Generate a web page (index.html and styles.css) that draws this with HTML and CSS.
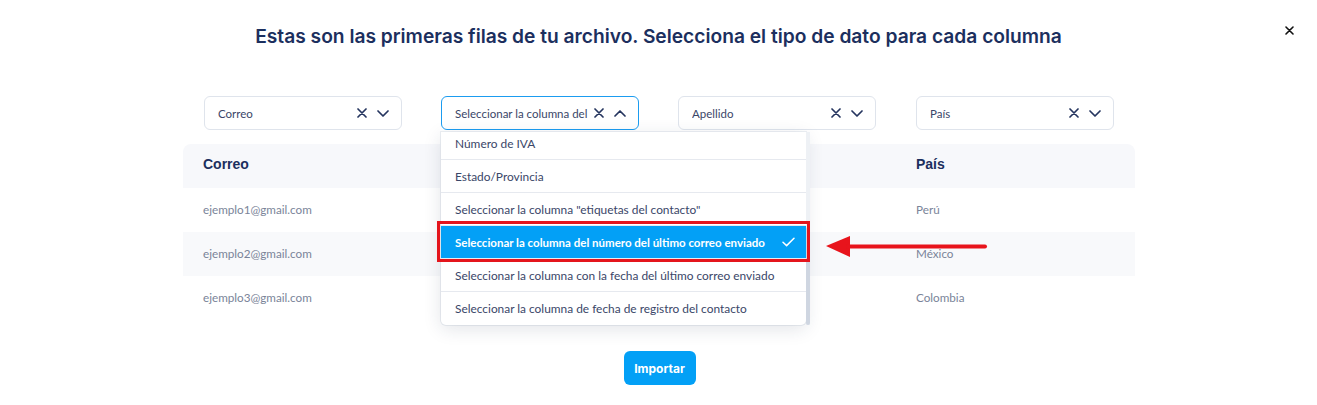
FILE: index.html
```html
<!DOCTYPE html>
<html lang="es">
<head>
<meta charset="utf-8">
<title>Importar</title>
<link rel="stylesheet" href="styles.css">
</head>
<body>
<div class="modal">
  <button class="close" aria-label="Cerrar">
    <svg width="9" height="9" viewBox="0 0 9 9"><path d="M1 1L8 8M8 1L1 8" stroke="#111" stroke-width="1.6" stroke-linecap="round"/></svg>
  </button>
  <h1 class="title">Estas son las primeras filas de tu archivo. Selecciona el tipo de dato para cada columna</h1>

  <div class="sheet">
    <div class="selects">
      <div class="cell-select">
        <div class="select">
          <span class="select-text">Correo</span>
          <svg class="ico-x" width="10" height="10" viewBox="0 0 10 10"><path d="M1 1L9 9M9 1L1 9" stroke="#25355f" stroke-width="1.7" stroke-linecap="round"/></svg>
          <svg class="ico-chev" width="12" height="7" viewBox="0 0 12 7"><path d="M1 1L6 6L11 1" fill="none" stroke="#25355f" stroke-width="1.7" stroke-linecap="round" stroke-linejoin="round"/></svg>
        </div>
      </div>
      <div class="cell-select">
        <div class="select focused">
          <span class="select-text">Seleccionar la columna del</span>
          <svg class="ico-x" width="10" height="10" viewBox="0 0 10 10"><path d="M1 1L9 9M9 1L1 9" stroke="#25355f" stroke-width="1.7" stroke-linecap="round"/></svg>
          <svg class="ico-chev" width="12" height="7" viewBox="0 0 12 7"><path d="M1 6L6 1L11 6" fill="none" stroke="#25355f" stroke-width="1.7" stroke-linecap="round" stroke-linejoin="round"/></svg>
        </div>
        <div class="dropdown">
          <ul class="options">
            <li class="option first">Número de IVA</li>
            <li class="option">Estado/Provincia</li>
            <li class="option">Seleccionar la columna "etiquetas del contacto"</li>
            <li class="option selected"><span class="opt-label">Seleccionar la columna del número del último correo enviado</span>
              <svg class="check" width="13" height="10" viewBox="0 0 13 10"><path d="M1 5.2L4.6 8.6L12 1.2" fill="none" stroke="#fff" stroke-width="1.5" stroke-linecap="round" stroke-linejoin="round"/></svg>
            </li>
            <li class="option">Seleccionar la columna con la fecha del último correo enviado</li>
            <li class="option">Seleccionar la columna de fecha de registro del contacto</li>
          </ul>
          <div class="scrollbar"><div class="thumb"></div></div>
        </div>
      </div>
      <div class="cell-select">
        <div class="select">
          <span class="select-text">Apellido</span>
          <svg class="ico-x" width="10" height="10" viewBox="0 0 10 10"><path d="M1 1L9 9M9 1L1 9" stroke="#25355f" stroke-width="1.7" stroke-linecap="round"/></svg>
          <svg class="ico-chev" width="12" height="7" viewBox="0 0 12 7"><path d="M1 1L6 6L11 1" fill="none" stroke="#25355f" stroke-width="1.7" stroke-linecap="round" stroke-linejoin="round"/></svg>
        </div>
      </div>
      <div class="cell-select">
        <div class="select">
          <span class="select-text">País</span>
          <svg class="ico-x" width="10" height="10" viewBox="0 0 10 10"><path d="M1 1L9 9M9 1L1 9" stroke="#25355f" stroke-width="1.7" stroke-linecap="round"/></svg>
          <svg class="ico-chev" width="12" height="7" viewBox="0 0 12 7"><path d="M1 1L6 6L11 1" fill="none" stroke="#25355f" stroke-width="1.7" stroke-linecap="round" stroke-linejoin="round"/></svg>
        </div>
      </div>
    </div>

    <div class="table">
      <div class="row head">
        <div class="td">Correo</div><div class="td"></div><div class="td"></div><div class="td">País</div>
      </div>
      <div class="row">
        <div class="td">ejemplo1@gmail.com</div><div class="td"></div><div class="td"></div><div class="td">Perú</div>
      </div>
      <div class="row alt">
        <div class="td">ejemplo2@gmail.com</div><div class="td"></div><div class="td"></div><div class="td">México</div>
      </div>
      <div class="row">
        <div class="td">ejemplo3@gmail.com</div><div class="td"></div><div class="td"></div><div class="td">Colombia</div>
      </div>
    </div>

    <svg class="arrow" width="164" height="24" viewBox="0 0 164 24">
      <polygon points="1,11 25,1 25,22" fill="#e8141c"/>
      <path d="M23 11.5H160" stroke="#e8141c" stroke-width="4" stroke-linecap="round"/>
    </svg>
  </div>

  <div class="actions">
    <button class="btn-primary">Importar</button>
  </div>
</div>
</body>
</html>
```

FILE: styles.css
```css
* { box-sizing: border-box; }
html, body { margin: 0; padding: 0; background: #fff; }
body { font-family: "Lato", "Open Sans", sans-serif; color: #3a4668; }

.modal { position: relative; width: 1317px; height: 405px; padding-top: 24px; }

.close {
  position: absolute; top: 21px; right: 19px;
  width: 18px; height: 18px; padding: 0; border: 0; background: none;
  display: flex; align-items: center; justify-content: center;
}

.title {
  margin: 0; text-align: center;
  font-family: "Inter", sans-serif; font-weight: 600; font-size: 19.2px; line-height: 24px;
  color: #1c2f5e;
}

.sheet { position: relative; width: 952px; margin: 48px 0 0 183px; }

.selects { display: grid; grid-template-columns: repeat(4, 238px); }
.cell-select { position: relative; display: flex; padding-left: 20px; }
.cell-select:first-child { padding-left: 21px; }
.cell-select:nth-child(n+3) { padding-left: 19px; }

.select {
  width: 198px; height: 34px;
  display: flex; align-items: center;
  padding: 0 12px 0 13px;
  border: 1px solid #dfe4ec; border-radius: 6px; background: #fff;
}
.select.focused { border-color: #1b9cf0; }
.select-text {
  flex: 1; min-width: 0; overflow: hidden; white-space: nowrap;
  font-size: 11.5px; color: #3a4668;
}
.ico-x { flex: none; margin-left: 4px; }
.ico-chev { flex: none; margin-left: 10px; }

.dropdown {
  position: absolute; top: 36px; left: 20px; z-index: 5;
  display: flex; width: 369px;
}
.options {
  list-style: none; margin: 0; padding: 0; width: 365px;
  background: #fff; border-radius: 0 0 5px 5px;
  box-shadow: 0 4px 18px rgba(30, 45, 80, 0.13), 0 0 0 1px #edf0f4;
}
.option {
  position: relative;
  height: 33px; display: flex; align-items: center;
  padding: 0 14px; border-top: 1px solid #e6e9ef;
  font-size: 11.9px; color: #3a4668; white-space: nowrap;
}
.option.first { height: 27px; border-top: 0; align-items: flex-start; padding-top: 4px; }
.option.selected {
  background: #03a0f6; color: #fff; font-weight: 700; padding-right: 11px;
  outline: 3px solid #e4151c; outline-offset: 1px; z-index: 2;
}
.opt-label { font-size: 11.5px; }
.check { flex: none; margin-left: auto; }

.scrollbar { width: 4px; height: 193px; background: #eef1f5; display: flex; flex-direction: column; justify-content: flex-end; }
.thumb { height: 98px; background: #cfd6e1; border-radius: 2px; }

.table { margin-top: 14px; }
.row { display: grid; grid-template-columns: repeat(4, 238px); height: 44px; align-items: center; padding-bottom: 2px; }
.row .td { padding-left: 20px; font-size: 11.7px; color: #7a8499; }
.row .td:last-child { padding-left: 19px; }
.row.head { background: #f7f8fb; border-radius: 8px 8px 0 0; padding-bottom: 4px; }
.row.head .td { font-family: "Liberation Sans", Arial, sans-serif; font-weight: 700; font-size: 14px; color: #1c2f5e; }
.row.alt { background: #f8f9fb; }

.arrow { position: absolute; left: 642px; top: 139px; }

.actions { display: flex; justify-content: center; margin-top: 31px; padding-left: 2px; }
.btn-primary {
  width: 72px; height: 34px; border: 0; border-radius: 6px;
  background: #03a0f6; color: #fff;
  font-family: "Inter", sans-serif; font-weight: 700; font-size: 12px;
}
```
